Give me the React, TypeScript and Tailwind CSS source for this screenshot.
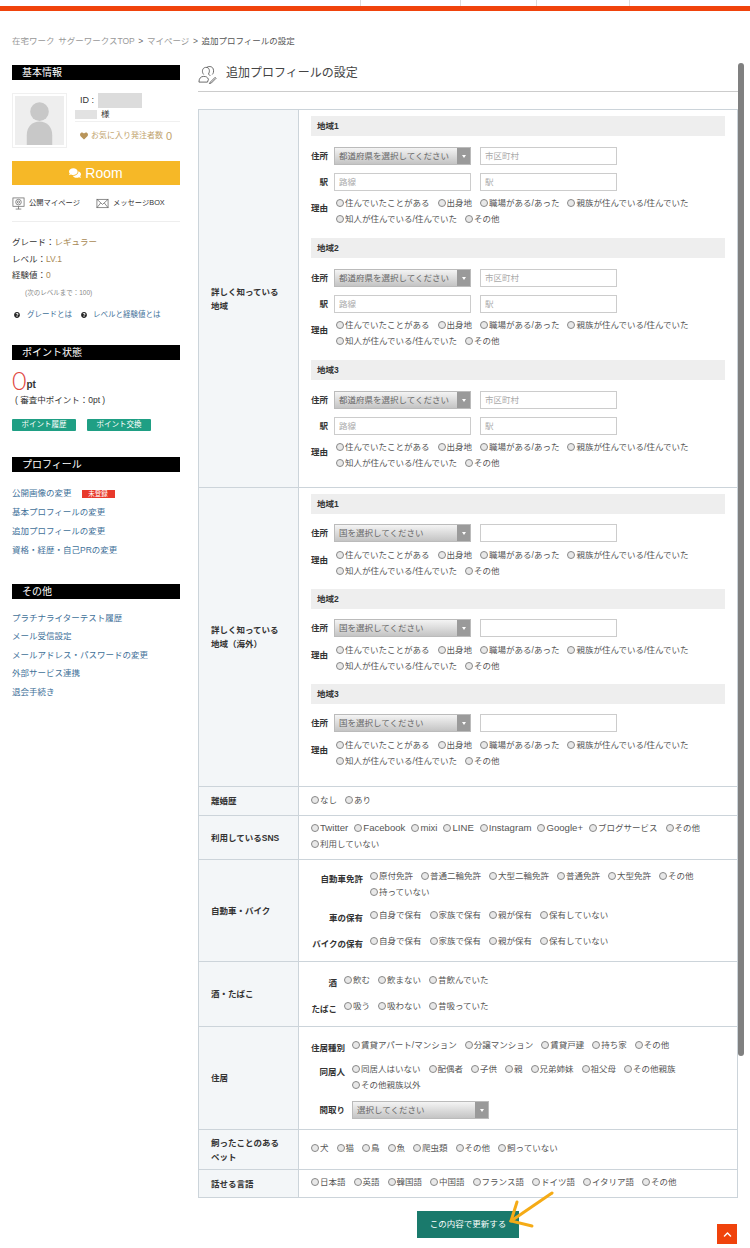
import React from "react";
import { FaComments, FaHeart, FaQuestionCircle, FaChevronUp } from "react-icons/fa";

const FONT = '"Liberation Sans", "Noto Sans CJK JP", sans-serif';

function Opt({ t, latin }: { t: string; latin?: boolean }) {
  return (
    <span className={`inline-flex items-center h-4 whitespace-nowrap ${latin ? "text-[9.6px] mr-[6px]" : "mr-2"}`}>
      <span className="w-2 h-2 mr-px rounded-full border border-[#888] bg-[#e8e8e8] shrink-0" />
      {t}
    </span>
  );
}

function Opts({ items, latin = [] }: { items: string[]; latin?: string[] }) {
  return (
    <div className="flex flex-wrap flex-1 text-[8.5px] leading-4 text-[#555]">
      {items.map((t) => (
        <Opt key={t} t={t} latin={latin.includes(t)} />
      ))}
    </div>
  );
}

function Sel({ text }: { text: string }) {
  return (
    <div className="w-[137px] h-[18px] flex items-center justify-between border border-[#bbb] bg-gradient-to-b from-[#f4f4f4] to-[#c4c4c4] text-[8.5px] text-[#666] shrink-0">
      <span className="pl-1">{text}</span>
      <span className="w-[13px] h-full bg-[#9a9a9a] flex items-center justify-center">
        <span className="w-0 h-0 border-x-[2px] border-x-transparent border-t-[3px] border-t-white" />
      </span>
    </div>
  );
}

function Inp({ ph, left }: { ph?: string; left?: boolean }) {
  return (
    <input
      readOnly
      placeholder={ph}
      className={`w-[137px] h-[18px] border border-[#ccc] bg-white px-1 text-[8.5px] placeholder:text-[#aaa] outline-none shrink-0 ${left ? "" : "ml-[9px]"}`}
    />
  );
}

function RowLabel({ t }: { t: string }) {
  return <div className="w-[17px] mr-[6px] font-bold text-[8.5px] text-[#333] whitespace-nowrap flex justify-end shrink-0">{t}</div>;
}

const REASONS = ["住んでいたことがある", "出身地", "職場がある/あった", "親族が住んでいる/住んでいた", "知人が住んでいる/住んでいた", "その他"];

function Reason() {
  return (
    <div className="flex">
      <div className="mt-[5px] leading-4 mr-[2px]">
        <RowLabel t="理由" />
      </div>
      <Opts items={REASONS} />
    </div>
  );
}

function Region({ n }: { n: number }) {
  return (
    <div className="mb-[11px]">
      <div className="h-5 bg-[#eeeeee] flex items-center pl-[6px] text-[8.5px] font-bold text-[#333]">地域{n}</div>
      <div className="flex items-center mt-[11px]">
        <RowLabel t="住所" />
        <Sel text="都道府県を選択してください" />
        <Inp ph="市区町村" />
      </div>
      <div className="flex items-center mt-2">
        <RowLabel t="駅" />
        <Inp ph="路線" left />
        <Inp ph="駅" />
      </div>
      <div className="mt-[4px]">
        <Reason />
      </div>
    </div>
  );
}

function Overseas({ n }: { n: number }) {
  return (
    <div className="mb-[10px]">
      <div className="h-5 bg-[#eeeeee] flex items-center pl-[6px] text-[8.5px] font-bold text-[#333]">地域{n}</div>
      <div className="flex items-center mt-[10px]">
        <RowLabel t="住所" />
        <Sel text="国を選択してください" />
        <Inp />
      </div>
      <div className="mt-[5px]">
        <Reason />
      </div>
    </div>
  );
}

function TR({ h, label, children, pt, last }: { h: string; label: React.ReactNode; children: React.ReactNode; pt: string; last?: boolean }) {
  return (
    <div className={`flex ${h} ${last ? "" : "border-b border-[#ccd4da]"}`}>
      <div className="w-[100px] shrink-0 bg-[#f3f6f8] border-r border-[#ccd4da] flex items-center pl-3 text-[8.5px] font-bold text-[#333] leading-[14px]">
        {label}
      </div>
      <div className={`flex-1 pl-3 pr-3 ${pt}`}>{children}</div>
    </div>
  );
}

function Sub({ label, w, items, mt = "" }: { label: string; w: string; items: string[]; mt?: string }) {
  return (
    <div className={`flex gap-[7px] ${mt}`}>
      <div className={`${w} text-right font-bold text-[8.5px] leading-4 mt-[3px] text-[#333] whitespace-nowrap shrink-0 flex justify-end`}>{label}</div>
      <Opts items={items} />
    </div>
  );
}

function Head({ t }: { t: string }) {
  return <div className="h-[15px] bg-black text-white text-[10px] leading-[15px] pl-[10px]">{t}</div>;
}

function Link({ t, extra, h = "h-[18.5px]" }: { t: string; extra?: React.ReactNode; h?: string }) {
  return (
    <div className={`${h} flex items-center text-[8.5px] text-[#3f7199]`}>
      {t}
      {extra}
    </div>
  );
}

function Avatar() {
  return (
    <div className="w-[55px] h-[55px] border border-[#f0f0f0] p-[2px] shrink-0">
      <div className="w-full h-full bg-[#eeeeee] overflow-hidden">
        <svg viewBox="0 0 50 50" className="w-full h-full">
          <circle cx="25" cy="16" r="9.5" fill="#c8c8c8" />
          <path d="M12 50 V40 C12 31 18 26 25 26 C32 26 38 31 38 40 V50Z" fill="#c8c8c8" />
        </svg>
      </div>
    </div>
  );
}

export default function App() {
  return (
    <div className="relative w-[750px] h-[1248px] overflow-hidden bg-white text-[#333]" style={{ fontFamily: FONT }}>
      {/* top strip */}
      <div className="relative h-[6px] bg-white">
        <span className="absolute left-[360px] top-0 h-[6px] w-px bg-[#ddd]" />
        <span className="absolute left-[460px] top-0 h-[6px] w-px bg-[#ddd]" />
        <span className="absolute left-[536px] top-0 h-[6px] w-px bg-[#ddd]" />
        <span className="absolute left-[629px] top-0 h-[6px] w-px bg-[#ddd]" />
      </div>
      <div className="h-[5px] bg-[#f0430c]" />

      {/* breadcrumb */}
      <div className="pl-3 mt-[24px] h-[12px] leading-3 text-[8.5px] text-[#999] [word-spacing:1.3px]">
        在宅ワーク サグーワークスTOP <span className="text-[#666]">&gt;</span> マイページ <span className="text-[#666]">&gt;</span> <span className="text-[#555]">追加プロフィールの設定</span>
      </div>

      <div className="flex pl-3 mt-[18px]">
        {/* Sidebar */}
        <aside className="w-[168px] shrink-0">
          <Head t="基本情報" />
          <div className="flex mt-[13px]">
            <Avatar />
            <div className="flex-1 ml-2 relative">
              <div className="flex items-center h-[15px] pl-[5px] text-[9px] text-[#333]">
                ID :<span className="ml-[4px] w-[44px] h-[15px] bg-[#dcdcdc]" />
              </div>
              <div className="flex items-center h-[10px] mt-[1px] text-[8.5px]">
                <span className="w-[22px] h-[9px] bg-[#e2e2e2]" />
                <span className="ml-1 leading-[10px]">様</span>
              </div>
              <div className="border-t border-[#f0f0f0] mt-[1.5px] pt-[5px] pl-[5px] flex items-center h-[24px] text-[8px] text-[#bfa36d]">
                <FaHeart className="w-[8px] h-[8px] mr-[3px] text-[#b9955a]" />
                お気に入り発注者数
                <span className="ml-[3px] text-[11px] leading-3">0</span>
              </div>
            </div>
          </div>
          <div className="h-6 mt-[13px] bg-[#f6b827] text-white flex items-center justify-center gap-1 text-[14px]">
            <FaComments className="w-3 h-3" />
            Room
          </div>
          <div className="flex items-center h-[14px] mt-[11px] text-[7.3px] text-[#333]">
            <svg viewBox="0 0 14 14" className="w-[13px] h-[13px] mr-1" fill="none" stroke="#666" strokeWidth="0.8">
              <rect x="1" y="1" width="12" height="9" />
              <circle cx="7" cy="5.5" r="3" />
              <circle cx="7" cy="5.5" r="1.2" />
              <path d="M4 13h6M7 10v3" />
            </svg>
            公開マイページ
            <svg viewBox="0 0 14 14" className="w-[13px] h-[13px] ml-[16px] mr-1" fill="none" stroke="#666" strokeWidth="0.8">
              <rect x="1" y="2.5" width="12" height="9" />
              <path d="M1 2.5 7 8l6-5.5M1 11.500 5 6.500M13 11.500 9 6.500" />
            </svg>
            メッセージBOX
          </div>
          <div className="border-t border-[#eeeeee] mt-[11px]" />
          <div className="mt-[12px] text-[8.5px] leading-[16.500px]">
            <div>グレード：<span className="text-[#a98a55]">レギュラー</span></div>
            <div>レベル：<span className="text-[#a98a55]">LV.1</span></div>
            <div>経験値：<span className="text-[#a98a55]">0</span></div>
          </div>
          <div className="pl-[13px] mt-[1px] h-[16px] leading-4 text-[6.5px] text-[#888]">(次のレベルまで：100)</div>
          <div className="flex items-center mt-[6px] h-4 text-[7.500px] text-[#3f7199]">
            <FaQuestionCircle className="w-[6px] h-[6px] ml-[2px] mr-[7px] text-[#222]" />
            グレードとは
            <FaQuestionCircle className="w-[6px] h-[6px] ml-[9px] mr-[6px] text-[#222]" />
            レベルと経験値とは
          </div>

          <div className="mt-[22px]">
            <Head t="ポイント状態" />
          </div>
          <div className="flex items-end h-[26px] mt-[7px]">
            <span className="text-[#e0473f] text-[25px] leading-[26px] font-['Lato'] font-light">0</span>
            <span className="text-[10px] font-bold leading-[16px]">pt</span>
          </div>
          <div className="pl-[3px] h-[14px] leading-[14px] text-[8.5px] text-[#333]">( 審査中ポイント：0pt )</div>
          <div className="flex gap-[11px] mt-[12px]">
            <div className="w-[64px] h-3 bg-[#1f9f84] rounded-[1px] text-white text-[7.500px] leading-3 text-center">ポイント履歴</div>
            <div className="w-[64px] h-3 bg-[#1f9f84] rounded-[1px] text-white text-[7.500px] leading-3 text-center">ポイント交換</div>
          </div>

          <div className="mt-[26px]">
            <Head t="プロフィール" />
          </div>
          <div className="mt-[12.500px]">
            <Link
              h="h-[19px]"
              t="公開画像の変更"
              extra={<span className="ml-[10px] w-[33px] h-[8px] bg-[#e8392b] text-white text-[6.500px] leading-[8px] text-center">未登録</span>}
            />
            <Link h="h-[19px]" t="基本プロフィールの変更" />
            <Link h="h-[19px]" t="追加プロフィールの変更" />
            <Link h="h-[19px]" t="資格・経歴・自己PRの変更" />
          </div>

          <div className="mt-[24px]">
            <Head t="その他" />
          </div>
          <div className="mt-[10px]">
            <Link t="プラチナライターテスト履歴" />
            <Link t="メール受信設定" />
            <Link t="メールアドレス・パスワードの変更" />
            <Link t="外部サービス連携" />
            <Link t="退会手続き" />
          </div>
        </aside>

        {/* Main */}
        <main className="ml-[18px] w-[540px] shrink-0">
          <div className="h-[26px] flex items-start border-b border-[#cccccc] box-content">
            <svg viewBox="0 0 20 20" className="w-[19px] h-[19px] mr-[9px]" fill="none" stroke="#555" strokeWidth="0.9">
              <path d="M6 10C4 8 4 3 8 2.500c4-.5 5 4 3 7l2 2" />
              <path d="M9 3c1-2 6-2 7 1s0 5-1 6" />
              <path d="M1 18c0-4 2-6 5-6s4 1 5 3l-1 3z" />
              <path d="m13 18 5-5 1 1-5 5-2 .5z" />
            </svg>
            <span className="text-[12px] leading-[15px] mt-px text-[#444]">追加プロフィールの設定</span>
          </div>

          <div className="mt-[17px] border border-[#ccd4da]">
            <TR h="h-[378px]" pt="pt-[6px]" label={<span>詳しく知っている<br />地域</span>}>
              <Region n={1} />
              <Region n={2} />
              <Region n={3} />
            </TR>
            <TR h="h-[299px]" pt="pt-[6px]" label={<span>詳しく知っている<br />地域（海外）</span>}>
              <Overseas n={1} />
              <Overseas n={2} />
              <Overseas n={3} />
            </TR>
            <TR h="h-[29px]" pt="pt-[5px]" label="離婚歴">
              <Opts items={["なし", "あり"]} />
            </TR>
            <TR h="h-[44px]" pt="pt-[4px]" label="利用しているSNS">
              <Opts
                latin={["Twitter", "Facebook", "mixi", "LINE", "Instagram", "Google+"]}
                items={["Twitter", "Facebook", "mixi", "LINE", "Instagram", "Google+", "ブログサービス", "その他", "利用していない"]}
              />
            </TR>
            <TR h="h-[102px]" pt="pt-[8px]" label="自動車・バイク">
              <Sub label="自動車免許" w="w-[52px]" items={["原付免許", "普通二輪免許", "大型二輪免許", "普通免許", "大型免許", "その他", "持っていない"]} />
              <Sub label="車の保有" w="w-[52px]" mt="mt-[7px]" items={["自身で保有", "家族で保有", "親が保有", "保有していない"]} />
              <Sub label="バイクの保有" w="w-[52px]" mt="mt-[7px]" items={["自身で保有", "家族で保有", "親が保有", "保有していない"]} />
            </TR>
            <TR h="h-[65px]" pt="pt-[10px]" label="酒・たばこ">
              <Sub label="酒" w="w-[26px]" items={["飲む", "飲まない", "昔飲んでいた"]} />
              <Sub label="たばこ" w="w-[26px]" mt="mt-[7px]" items={["吸う", "吸わない", "昔吸っていた"]} />
            </TR>
            <TR h="h-[103px]" pt="pt-[10px]" label="住居">
              <Sub label="住居種別" w="w-[34px]" items={["賃貸アパート/マンション", "分譲マンション", "賃貸戸建", "持ち家", "その他"]} />
              <Sub label="同居人" w="w-[34px]" mt="mt-[5px]" items={["同居人はいない", "配偶者", "子供", "親", "兄弟姉妹", "祖父母", "その他親族", "その他親族以外"]} />
              <div className="flex items-center gap-[7px] mt-[8px]">
                <div className="w-[34px] font-bold text-[8.5px] whitespace-nowrap flex justify-end">間取り</div>
                <Sel text="選択してください" />
              </div>
            </TR>
            <TR h="h-[40px]" pt="pt-[10px]" label={<span>飼ったことのある<br />ペット</span>}>
              <Opts items={["犬", "猫", "鳥", "魚", "爬虫類", "その他", "飼っていない"]} />
            </TR>
            <TR h="h-[27px]" pt="pt-[4px]" last label="話せる言語">
              <Opts items={["日本語", "英語", "韓国語", "中国語", "フランス語", "ドイツ語", "イタリア語", "その他"]} />
            </TR>
          </div>

          <div className="flex justify-center mt-[13px]">
            <div className="w-[102px] h-[27px] bg-[#1a7a6c] text-white text-[8.5px] flex items-center justify-center">この内容で更新する</div>
          </div>
        </main>
      </div>

      {/* Overlays */}
      <div className="absolute left-[738px] top-[63px] w-[6px] h-[993px] rounded-[3px] bg-[#808080]" />
      <svg className="absolute left-[505px] top-[1190px] w-[52px] h-[40px]" viewBox="0 0 52 40" fill="none" stroke="#f5ab16" strokeWidth="3" strokeLinecap="round">
        <path d="M47 3 6 31" />
        <path d="M12 12 6 31 27 36" />
      </svg>
      <div className="absolute left-[717px] top-[1224px] w-5 h-5 bg-[#f0430c] flex items-center justify-center text-white">
        <FaChevronUp className="w-[9px] h-[9px]" />
      </div>
    </div>
  );
}
